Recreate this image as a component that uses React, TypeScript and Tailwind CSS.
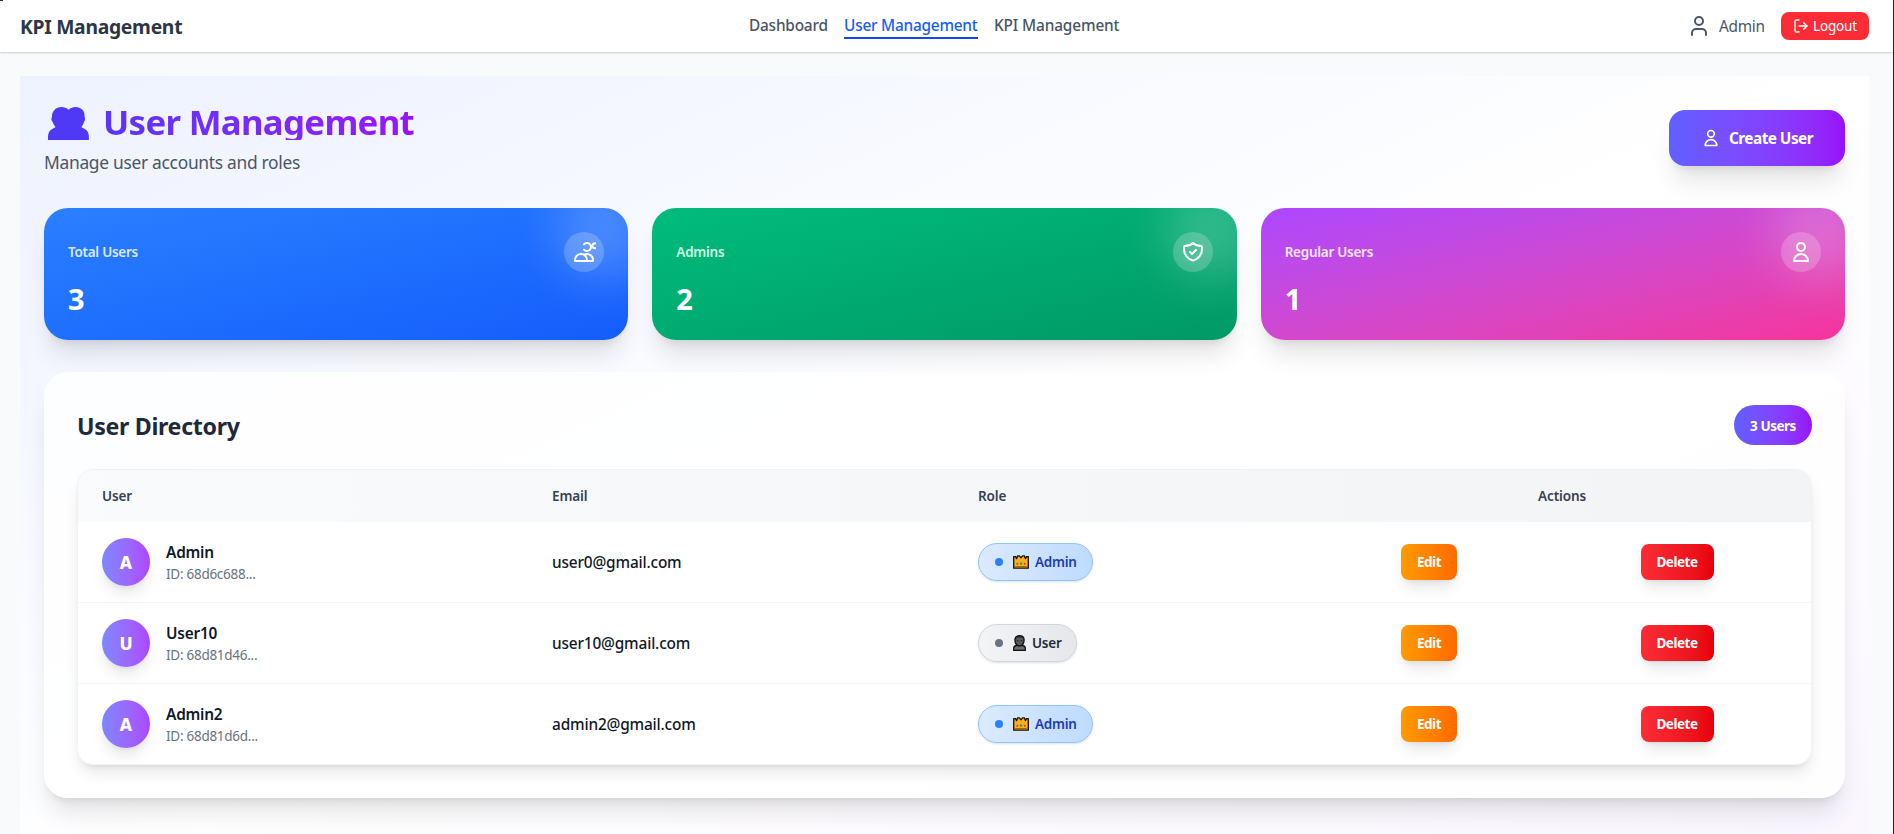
import type { ReactNode } from "react";
import { LogOut, User } from "lucide-react";

const USER_PATH = "M16 7a4 4 0 11-8 0 4 4 0 018 0zM12 14a7 7 0 00-7 7h14a7 7 0 00-7-7z";
const GROUP_PATH =
  "M12 4.354a4 4 0 110 5.292M15 21H3v-1a6 6 0 0112 0v1zm0 0h6v-1a6 6 0 00-9-5.197m13.5-9a2.5 2.5 0 11-5 0 2.5 2.5 0 015 0z";
const SHIELD_PATH =
  "M9 12l2 2 4-4m5.618-4.016A11.955 11.955 0 0112 2.944a11.955 11.955 0 01-8.618 3.04A12.02 12.02 0 003 9c0 5.591 3.824 10.29 9 11.622 5.176-1.332 9-6.03 9-11.622 0-1.042-.133-2.052-.382-3.016z";

function OutlineIcon({ d, className }: { d: string; className: string }) {
  return (
    <svg className={className} fill="none" stroke="currentColor" strokeWidth={2} strokeLinecap="round" strokeLinejoin="round" viewBox="0 0 24 24">
      <path d={d} />
    </svg>
  );
}

function GroupGlyph() {
  return (
    <svg className="h-[33px] w-[41px]" viewBox="0 0 41 33" fill="#4f39f6">
      <path d="M6 3.500C8 .8 11 0 13.500 0c2.800 0 5 .9 7 2.800C22.500 .9 25 0 27.500 0c3 0 5.800 1.200 7.600 3.600 1.300 1.800 1.500 4 1.400 6.200.9 1.400.8 3.400-.4 5-.6 2-1.400 3.600-2.600 5.200.8 1 1.900 1.300 3.200 2 2.800 1.500 4.200 4.200 4.200 7.500V33H0v-3.500c0-3.300 1.400-6 4.200-7.500 1.300-.7 2.400-1 3.200-2-1.200-1.600-2.200-3.200-2.900-5.200-1.300-1.600-1.400-3.600-.5-5-.1-2.200.5-4.400 2-6.300z" />
    </svg>
  );
}

function CrownGlyph() {
  return (
    <svg className="h-[14px] w-4" viewBox="0 0 16 14">
      <path d="M.7 1.600h1.800l1.100 2L4.700.8h1.700l1.600 2L9.600.8h1.700l1.100 2.800 1.100-2h1.800v11.600H.7z" fill="#fbb01c" stroke="#111" strokeWidth="1.300" strokeLinejoin="round" />
      <path d="M1.500 11.500h13" stroke="#a96a00" strokeWidth="1" />
      <circle cx="4.300" cy="8.700" r="1" fill="#d63b2f" />
      <circle cx="8" cy="8.500" r="1.200" fill="#1fa07a" />
      <circle cx="11.700" cy="8.700" r="1" fill="#d63b2f" />
    </svg>
  );
}

function PersonGlyph() {
  return (
    <svg className="h-4 w-[13px]" viewBox="0 0 13 16">
      <path d="M.7 15.300v-2.100c0-1.800 1.300-2.800 3.300-2.900h5c2 .1 3.300 1.100 3.300 2.900v2.100z" fill="#6b6b6b" stroke="#111" strokeWidth="1.300" />
      <path d="M6.500.7C3.800.7 1.900 2.300 1.900 5c0 3.300 2 6 4.600 6s4.600-2.700 4.600-6C11.100 2.300 9.200.7 6.500.7z" fill="#595959" stroke="#111" strokeWidth="1.300" />
      <path d="M2.600 4.500C4 2 5 2.400 6.500 2.400s2.500-.4 3.900 2.100C9.600 1.800 8.300 1 6.500 1S3.400 1.800 2.600 4.500z" fill="#222" />
      <circle cx="4.700" cy="5.700" r=".6" fill="#111" />
      <circle cx="8.300" cy="5.700" r=".6" fill="#111" />
    </svg>
  );
}

type StatProps = { label: string; value: number; icon: string; card: string; labelColor: string };

function StatCard({ label, value, icon, card, labelColor }: StatProps) {
  return (
    <div className={`relative overflow-hidden rounded-3xl p-6 text-white shadow-xl ${card}`}>
      <div className="absolute -top-6 -right-6 size-24 rounded-full bg-white/20 blur-xl" />
      <div className="relative flex items-center justify-between">
        <span className={`text-[13.5px] leading-5 font-semibold tracking-[-0.02em] ${labelColor}`}>{label}</span>
        <span className="rounded-full bg-white/20 p-2">
          <OutlineIcon d={icon} className="size-6" />
        </span>
      </div>
      <p className="relative mt-[9px] h-[35px] text-[29px] leading-9 font-bold tracking-[-0.01em]">{value}</p>
    </div>
  );
}

function RoleBadge({ role }: { role: "Admin" | "User" }) {
  const admin = role === "Admin";
  const tone = admin
    ? "w-[115px] border-[#8ec5ff] bg-gradient-to-r from-blue-100 to-blue-200 text-[#193cb8]"
    : "w-[99px] border-gray-300 bg-gradient-to-r from-gray-100 to-gray-200 text-gray-800";
  return (
    <span className={`inline-flex h-[38px] items-center rounded-full border pl-4 text-[13.5px] font-semibold tracking-[-0.018em] shadow-sm ${tone}`}>
      <span className={`mr-2.5 size-2 rounded-full ${admin ? "bg-blue-500" : "bg-gray-500"}`} />
      {admin ? <CrownGlyph /> : <PersonGlyph />}
      <span className={admin ? "pl-1.5" : "pl-1.5"}>{role}</span>
    </span>
  );
}

function RowButton({ className, children }: { className: string; children: ReactNode }) {
  return (
    <button className={`h-9 rounded-lg bg-gradient-to-r text-center text-[13.5px] font-bold tracking-[-0.035em] text-white shadow-lg ${className}`}>
      {children}
    </button>
  );
}

const users: { name: string; id: string; email: string; role: "Admin" | "User" }[] = [
  { name: "Admin", id: "68d6c688", email: "user0@gmail.com", role: "Admin" },
  { name: "User10", id: "68d81d46", email: "user10@gmail.com", role: "User" },
  { name: "Admin2", id: "68d81d6d", email: "admin2@gmail.com", role: "Admin" },
];

const COLUMNS = "grid grid-cols-[450px_426px_359px_232px_1fr] items-center";

export default function App() {
  return (
    <div className="relative flex h-[834px] w-full flex-col overflow-hidden border-r border-[#1e1e20] bg-gray-50 font-['Noto_Sans',sans-serif]">
      <div className="absolute top-0 left-0 z-20 h-px w-[3px] bg-[#333]" />
      <header className="relative z-10 flex h-[52px] shrink-0 items-center justify-between bg-white pr-6 pl-5 shadow-[0_1px_2px_0_rgba(0,0,0,0.18)]">
        <h1 className="w-[162px] pt-0.5 text-[19.3px] leading-7 font-bold tracking-[-0.014em] whitespace-nowrap text-[#2c3646]">KPI Management</h1>
        <nav className="flex gap-4 text-[15.4px] leading-6 font-medium text-gray-600">
          <a className="w-[79px] pt-px whitespace-nowrap tracking-[-0.014em]">Dashboard</a>
          <a className="h-[26px] w-[134px] border-b-2 border-blue-700 pt-px whitespace-nowrap tracking-[-0.015em] text-blue-600">User Management</a>
          <a className="w-[126px] pt-px whitespace-nowrap tracking-[-0.009em]">KPI Management</a>
        </nav>
        <div className="flex items-center">
          <User className="size-6 text-gray-600" />
          <span className="mr-[17px] ml-2 w-[45px] pt-0.5 text-[15.4px] leading-6 tracking-[-0.018em] text-gray-600">Admin</span>
          <button className="flex h-7 w-[88px] items-center gap-1 rounded-lg bg-[#fb2c36] px-3 text-[13.5px] tracking-[-0.011em] text-white">
            <LogOut className="size-4 shrink-0" />
            Logout
          </button>
        </div>
      </header>

      <main className="mt-6 mr-6 ml-5 h-[834px] shrink-0 bg-gradient-to-br from-indigo-50 via-white to-purple-50 p-6">
        <div className="flex items-center justify-between">
          <div>
            <h2 className="flex h-10 text-[34.8px] leading-10 font-bold tracking-[-0.02em]">
              <span className="mt-[7px] ml-1 shrink-0">
                <GroupGlyph />
              </span>
              <span className="ml-[14px] block h-10 bg-gradient-to-r from-[#5a35f5] to-[#9810fa] bg-clip-text pt-[2px] pr-1 whitespace-nowrap text-transparent">
                User Management
              </span>
            </h2>
            <p className="mt-2 text-[17.4px] leading-7 tracking-[-0.017em] text-gray-600">Manage user accounts and roles</p>
          </div>
          <button className="flex h-14 w-44 items-center rounded-2xl bg-gradient-to-r from-[#615fff] to-[#9810fa] px-8 text-[15.4px] font-bold tracking-[-0.036em] whitespace-nowrap text-white shadow-xl">
            <OutlineIcon d={USER_PATH} className="mr-2 size-5 shrink-0" />
            <span className="pt-0.5">Create User</span>
          </button>
        </div>

        <section className="mt-8 grid grid-cols-3 gap-6">
          <StatCard label="Total Users" value={3} icon={GROUP_PATH} labelColor="text-blue-100" card="bg-gradient-to-br from-[#2b7fff] to-[#155dfc]" />
          <StatCard label="Admins" value={2} icon={SHIELD_PATH} labelColor="text-emerald-100" card="bg-gradient-to-br from-[#00bc7d] to-[#009966]" />
          <StatCard label="Regular Users" value={1} icon={USER_PATH} labelColor="text-purple-100" card="bg-gradient-to-br from-[#ad46ff] to-[#f6339a]" />
        </section>

        <section className="mt-8 rounded-3xl border border-white/20 bg-white/80 p-8 shadow-xl">
          <div className="flex items-center justify-between">
            <h3 className="pt-0.5 text-[23.2px] leading-8 font-bold tracking-[-0.014em] text-gray-800">User Directory</h3>
            <span className="flex h-10 w-[78px] items-center justify-center rounded-full bg-gradient-to-r from-[#615fff] to-[#9810fa] pt-0.5 text-[13.5px] font-bold tracking-[-0.035em] text-white">
              3 Users
            </span>
          </div>

          <div className="mt-6 overflow-hidden rounded-2xl border border-gray-200/60 shadow-lg">
            <div className={`${COLUMNS} h-[52px] bg-gradient-to-r from-gray-50 to-gray-100 text-[13.5px] font-semibold tracking-[-0.01em] text-gray-700`}>
              <span className="px-6">User</span>
              <span className="px-6">Email</span>
              <span className="px-6">Role</span>
              <span className="col-span-2 text-center">Actions</span>
            </div>
            <div className="divide-y divide-gray-100 bg-white/50">
              {users.map((u) => (
                <div key={u.id} className={`${COLUMNS} box-content h-20`}>
                  <div className="flex items-center px-6">
                    <span className="flex size-12 items-center justify-center rounded-full bg-gradient-to-r from-[#7c86ff] to-[#ad46ff] pt-px text-[17.4px] font-extrabold text-white shadow-lg">
                      {u.name[0]}
                    </span>
                    <div className="ml-4">
                      <p className="h-6 pt-px text-[15.4px] leading-6 font-semibold tracking-[-0.014em] text-gray-900">{u.name}</p>
                      <p className="text-[13.5px] leading-5 tracking-[-0.02em] text-gray-500">ID: {u.id}...</p>
                    </div>
                  </div>
                  <span className="px-6 pt-0.5 text-[15.4px] font-medium tracking-[-0.011em] text-gray-900">{u.email}</span>
                  <div className="flex px-6">
                    <RoleBadge role={u.role} />
                  </div>
                  <div className="flex justify-center">
                    <RowButton className="w-14 from-[#fe9a00] to-[#ff6900]">Edit</RowButton>
                  </div>
                  <div className="flex justify-center pr-0.5">
                    <RowButton className="w-[73px] from-[#fb2c36] to-[#e7000b]">Delete</RowButton>
                  </div>
                </div>
              ))}
            </div>
          </div>
        </section>
      </main>
    </div>
  );
}
